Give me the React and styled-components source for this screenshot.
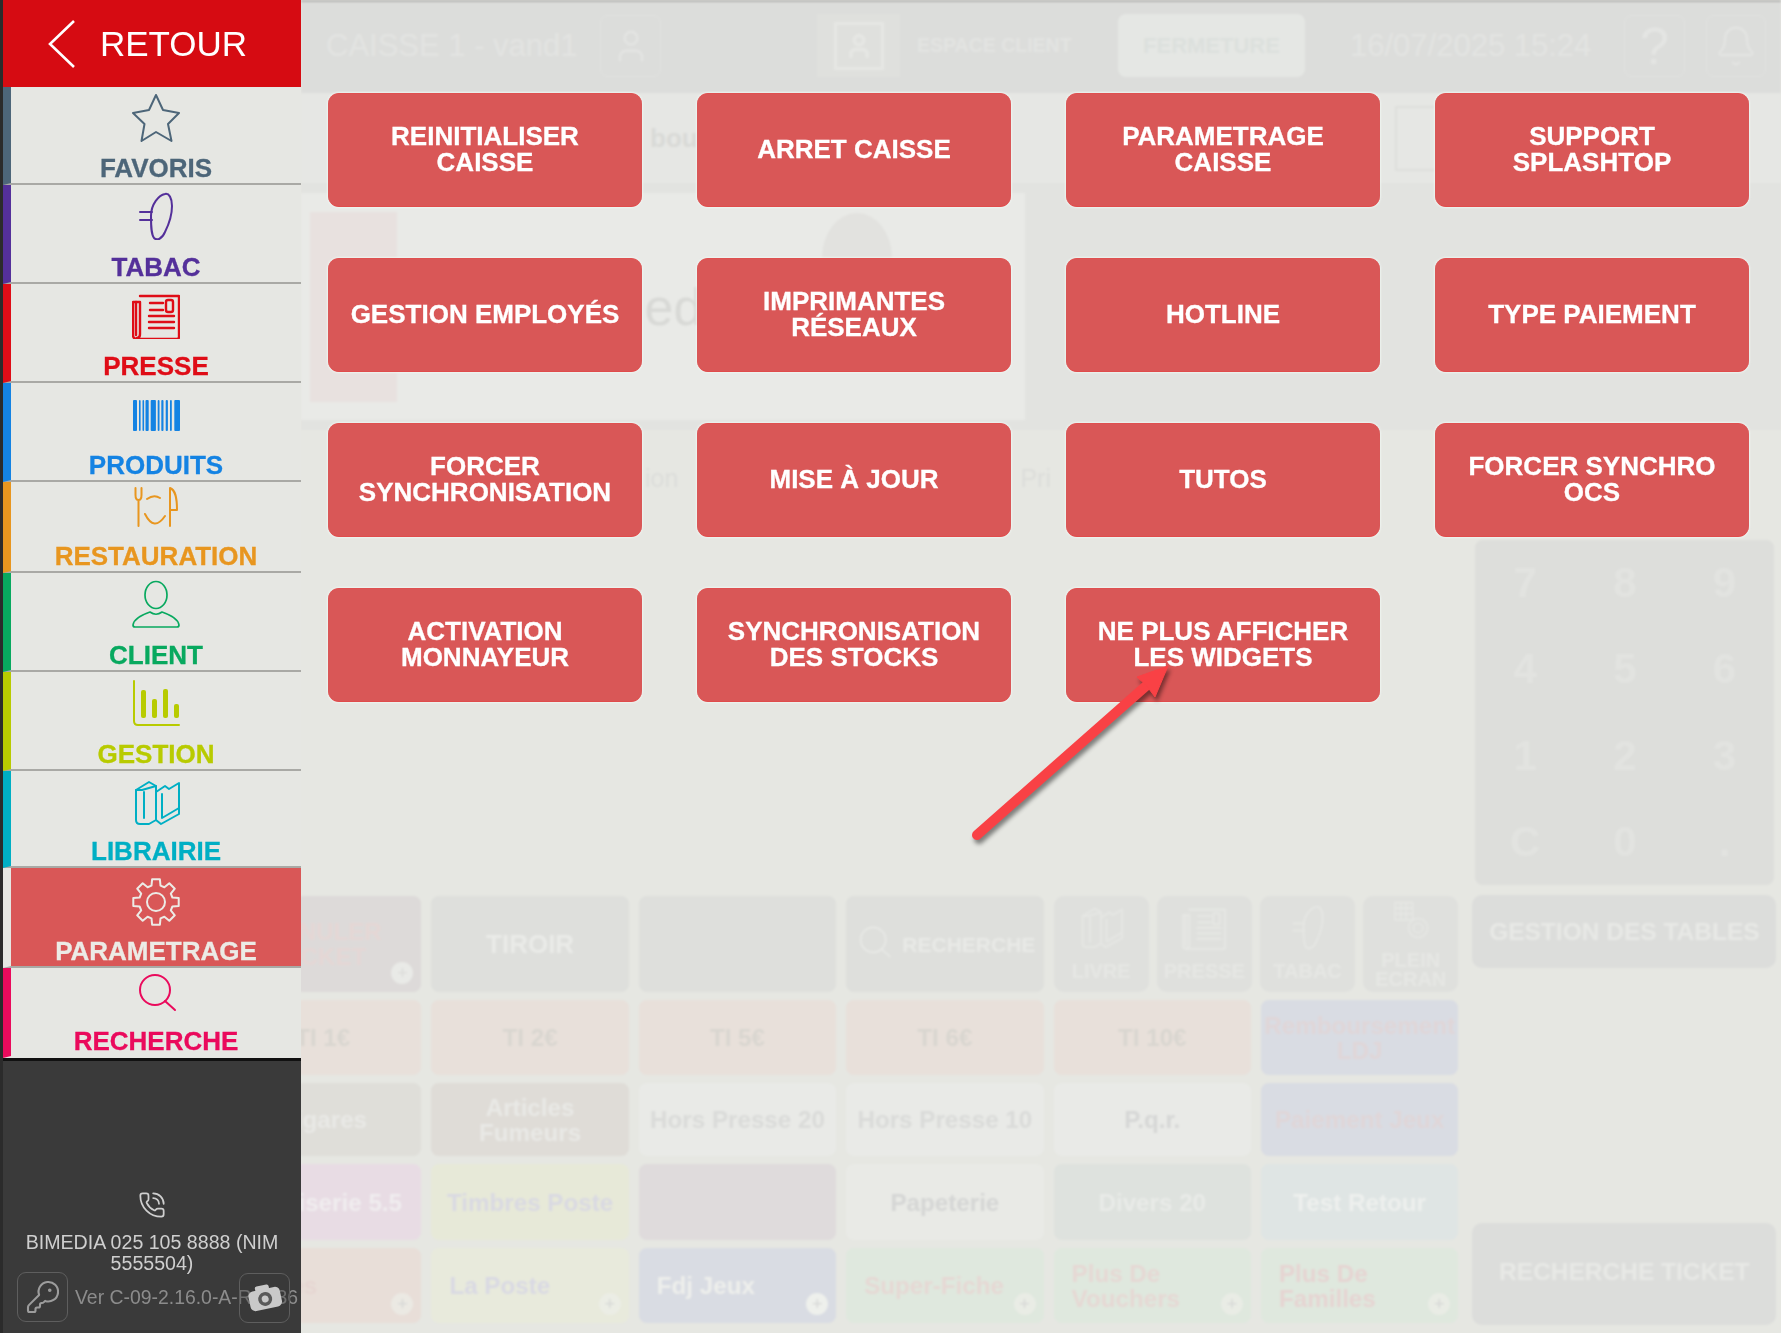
import React from 'react'
import styled, { createGlobalStyle } from 'styled-components'
import { Bell, KeyRound, PhoneCall, User } from 'lucide-react'

const Global = createGlobalStyle`
  html, body { margin: 0; padding: 0; background: #e6e7e2; }
  * { box-sizing: border-box; }
  body { font-family: "Liberation Sans", Arial, sans-serif; }
`

const Screen = styled.div`
  display: flex;
  width: 1781px;
  height: 1333px;
  overflow: hidden;
`

/* ---------- sidebar ---------- */

const Sidebar = styled.aside`
  position: relative;
  z-index: 2;
  flex: 0 0 301px;
  display: flex;
  flex-direction: column;
  border-left: 3px solid #2b2b2b;
  background: #e6e7e3;
`

const BackHeader = styled.div`
  height: 87px;
  display: flex;
  align-items: center;
  padding-left: 45px;
  gap: 25px;
  background: #d60b12;
  color: #fff;
  font-size: 35px;
`

const NavItem = styled.div`
  height: ${p => p.$h}px;
  padding-top: ${p => p.$top}px;
  display: flex;
  flex-direction: column;
  align-items: center;
  border-left: 8.5px solid ${p => p.$active ? '#e6e7e3' : p.$color};
  border-bottom: 2px solid ${p => p.$last ? 'transparent' : '#a9a9a5'};
  background: ${p => p.$active ? '#d95757' : '#e6e7e3'};
  color: ${p => p.$active ? '#ecebe6' : p.$color};
  svg { flex: 0 0 48px; }
`

const NavLabel = styled.div`
  margin-top: auto;
  padding-bottom: 1px;
  font-size: 26px;
  line-height: 27px;
  font-weight: 700;
  -webkit-text-stroke: 0.3px currentColor;
  white-space: nowrap;
`

const SideFooter = styled.div`
  flex: 1;
  display: flex;
  flex-direction: column;
  align-items: center;
  justify-content: flex-end;
  padding-bottom: 11px;
  background: #3a3a3a;
  border-top: 3px solid #111;
  color: #cfcfcf;
  svg.phone { margin-bottom: 13px; }
`

const Contact = styled.div`
  width: 270px;
  margin-bottom: -2px;
  text-align: center;
  font-size: 19.6px;
  line-height: 21px;
`

const FooterRow = styled.div`
  position: relative;
  width: 100%;
  display: flex;
  align-items: center;
  padding-left: 14px;
`

const KeyBox = styled.div`
  flex: 0 0 51px;
  height: 50px;
  display: flex;
  align-items: center;
  justify-content: center;
  border: 1.5px solid #5e5e5e;
  border-radius: 9px;
  color: #9c9c9c;
`

const Version = styled.span`
  margin-left: 7px;
  color: #8c8c8c;
  font-size: 19.4px;
  white-space: nowrap;
`

const CameraBox = styled(KeyBox)`
  position: absolute;
  left: 236px;
  top: 1px;
  width: 51px;
  background: rgba(58, 58, 58, 0.35);
`

/* ---------- faded screen behind the menu ---------- */

const Main = styled.main`
  position: relative;
  flex: 1;
  min-width: 0;
  overflow: hidden;
`

const Backdrop = styled.div`
  display: flex;
  flex-direction: column;
  height: 1333px;
  background: #e6e7e2;
  filter: blur(0.9px);
`

const TopBar = styled.div`
  flex: 0 0 93px;
  display: flex;
  align-items: center;
  padding: 0 0 4px 25px;
  background: #dcdddb;
  border-top: 2px solid #b4b4b2;
`

const BarText = styled.span`
  width: ${p => p.$w}px;
  margin-left: ${p => p.$ml || 0}px;
  color: #e3e4e2;
  font-size: ${p => p.$size}px;
  font-weight: ${p => p.$bold ? 700 : 400};
  white-space: nowrap;
`

const OutlineBox = styled.div`
  flex: 0 0 ${p => p.$w}px;
  height: 62px;
  margin-left: ${p => p.$ml}px;
  display: flex;
  align-items: center;
  justify-content: center;
  border: 1.5px solid #e2e3e1;
  border-radius: 8px;
  color: #e4e5e3;
  font-size: 52px;
`

const PortraitBox = styled.div`
  flex: 0 0 83px;
  height: 63px;
  margin-left: 156px;
  display: flex;
  align-items: center;
  justify-content: center;
  background: #dfe0dd;
  color: #e6e7e4;
`

const PortraitFrame = styled.div`
  width: 50px;
  height: 48px;
  display: flex;
  align-items: center;
  justify-content: center;
  border: 3px solid #e6e7e4;
`

const LightButton = styled.div`
  flex: 0 0 187px;
  height: 63px;
  margin-left: 47px;
  display: flex;
  align-items: center;
  justify-content: center;
  border-radius: 8px;
  background: #e5e7e4;
  color: #dce0dd;
  font-size: 22px;
  font-weight: 700;
`

const SearchBand = styled.div`
  flex: 0 0 90px;
  display: flex;
  align-items: center;
  padding-left: 349px;
  background: #e6e7e4;
  color: #d9dad7;
  font-size: 26px;
  font-weight: 700;
`

const BandBox = styled.div`
  width: 48px;
  height: 65px;
  margin-left: 697px;
  border: 2px solid #dedfdc;
`

const CardZone = styled.div`
  flex: 0 0 247px;
  padding-top: 10px;
  background: #e2e3e0;
`

const ProfileCard = styled.div`
  width: 724px;
  height: 227px;
  display: flex;
  align-items: center;
  background: #e9eae7;
  overflow: hidden;
`

const RedBlock = styled.div`
  flex: 0 0 87px;
  height: 190px;
  margin-left: 9px;
  background: #e8e1df;
`

const Brand = styled.div`
  margin-left: 158px;
  color: #d8d9d6;
  font-size: 52px;
`

const Head = styled.div`
  flex: 0 0 70px;
  height: 90px;
  align-self: flex-start;
  margin: 20px 0 0 79px;
  border-radius: 50%;
  background: #e2e2df;
`

const Lower = styled.div`
  flex: 1;
  display: flex;
  margin-left: -77px;
`

const LeftColumn = styled.div`
  flex: 0 0 1234px;
`

const Tabs = styled.div`
  height: 466px;
  padding: 34px 0 0 421px;
  display: flex;
  color: #dcddda;
  font-size: 25px;
  span + span { margin-left: 342px; }
`

const ProductGrid = styled.div`
  display: grid;
  grid-template-columns: repeat(6, 197.4px);
  grid-template-rows: 96px 75px 73px 76px 75px;
  gap: 8px 10px;
`

const Tile = styled.div`
  position: relative;
  display: flex;
  align-items: center;
  justify-content: ${p => p.$left ? 'flex-start' : 'center'};
  gap: 8px;
  padding: ${p => p.$left ? '0 8px 0 18px' : '0 6px'};
  border-radius: 8px;
  background: ${p => p.$bg};
  color: ${p => p.$fg};
  font-size: ${p => p.$size || 24.2}px;
  line-height: 25px;
  font-weight: 700;
  text-align: ${p => p.$left ? 'left' : 'center'};
  overflow: hidden;
`

const PlusBadge = styled.span`
  position: absolute;
  right: 8px;
  bottom: 8px;
  width: 22px;
  height: 22px;
  display: flex;
  align-items: center;
  justify-content: center;
  border-radius: 50%;
  background: ${p => p.$bg};
  color: ${p => p.$fg};
  font-size: 18px;
  font-weight: 400;
`

const QuickTiles = styled.div`
  grid-column: span 2;
  display: grid;
  grid-template-columns: repeat(4, 1fr);
  gap: 8px;
`

const QuickTile = styled.div`
  display: flex;
  flex-direction: column;
  align-items: center;
  justify-content: space-between;
  padding: ${p => p.$tight ? '3px 0 3px' : '6px 0 11px'};
  border-radius: 10px;
  background: #dfe0dd;
  color: #e6e7e4;
  font-size: 20px;
  line-height: 19px;
  font-weight: 700;
  text-align: center;
`

const RightColumn = styled.div`
  margin-left: 14px;
  width: 304px;
  display: flex;
  flex-direction: column;
  padding: 110px 0 8px;
`

const Keypad = styled.div`
  height: 345px;
  margin: 0 2px 0 3px;
  display: grid;
  grid-template-columns: repeat(3, 1fr);
  grid-template-rows: repeat(4, 1fr);
  align-items: center;
  justify-items: center;
  border-radius: 8px;
  background: #dddedb;
  color: #e2e3e0;
  font-size: 42px;
  font-weight: 700;
`

const SideAction = styled.div`
  height: ${p => p.$h}px;
  margin-top: ${p => p.$mt};
  padding-bottom: ${p => p.$pb || 0}px;
  display: flex;
  align-items: center;
  justify-content: center;
  border-radius: 10px;
  background: #dcdddb;
  color: #e8e9e6;
  font-size: 24.5px;
  font-weight: 700;
  white-space: nowrap;
`

/* ---------- settings menu ---------- */

const MenuLayer = styled.div`
  position: absolute;
  inset: 0;
  padding: 93px 0 0 27px;
`

const MenuGrid = styled.div`
  display: grid;
  grid-template-columns: repeat(4, 314px);
  grid-auto-rows: 114px;
  gap: 51px 55px;
`

const MenuButton = styled.div`
  display: flex;
  align-items: center;
  justify-content: center;
  padding: 0 12px 2px;
  border-radius: 11px;
  border-top: 1px solid #df5050;
  border-bottom: 1px solid #e04c4c;
  background: #d95757;
  box-shadow: 0 0 2px 1px rgba(240, 248, 244, 0.8);
  color: #fff;
  font-size: 26px;
  line-height: 26.5px;
  font-weight: 700;
  -webkit-text-stroke: 0.3px #fff;
  text-align: center;
`

const ArrowMark = styled.svg`
  position: absolute;
  left: 660px;
  top: 650px;
  overflow: visible;
  filter: drop-shadow(2px 4px 2px rgba(0, 0, 0, 0.45));
`

/* ---------- drawings ---------- */

const Drawing = ({ children, w = 48, h = 48, sw = 2 }) => (
  <svg width={w} height={h} viewBox="0 0 48 48" fill="none" stroke="currentColor"
    strokeWidth={sw} strokeLinecap="round" strokeLinejoin="round">
    {children}
  </svg>
)

const StarIcon = p => (
  <Drawing {...p}>
    <path d="M24 1 31 16 47 19 36 30 39.5 47 24 38 9.5 47 12.5 30 1 19 17 16Z" />
  </Drawing>
)

const TabacIcon = p => (
  <Drawing {...p}>
    <path d="M33 2C37 1 40 6 40 14 40 22 38 30 33 40 30 47 25 49 22 46 19 42 19 34 19 24 19 12 27 3 33 2Z" />
    <path d="M8 20H20M8 28H20" />
  </Drawing>
)

const PresseIcon = p => (
  <Drawing {...p} sw={2.4}>
    <path d="M8 5H47V46Q47 48 45 48H5Q1 48 1 44V11H8V43Q8 47 5 47" />
    <path d="M4 11V44" />
    <path d="M18 12H31M18 19H31M17 25H42M17 31H42M17 37H42" />
    <rect x="34" y="9" width="7" height="12" rx="2" />
  </Drawing>
)

const BarcodeIcon = p => (
  <Drawing {...p}>
    <g fill="currentColor" stroke="none">
      {[[1, 4], [7, 1.6], [10.5, 1.6], [13.5, 3.2], [18.7, 5.2], [25.7, 1.8], [29.3, 2.2], [33.7, 2.2], [38, 1.8], [42.3, 5.7]].map(([x, w]) => (
        <rect key={x} x={x} y="10" width={w} height="31" rx="0.9" />
      ))}
    </g>
  </Drawing>
)

const RestoIcon = p => (
  <Drawing {...p}>
    <path d="M3.5 2V9Q3.5 14 6.5 14T9.5 9V2M6.5 14V40" />
    <path d="M15 13Q22 8 28 12M13 28Q22 46 33 30" />
    <path d="M38 40V2C43 4 45 10 45 24H38" />
  </Drawing>
)

const ClientIcon = p => (
  <Drawing {...p} sw={1.7}>
    <ellipse cx="24" cy="15" rx="11" ry="13.5" />
    <path d="M1 45C2 38 12 34 18 32 22 35 26 35 30 32 36 34 46 38 47 45Q47 47 45 47H3Q1 47 1 45Z" />
  </Drawing>
)

const GestionIcon = p => (
  <Drawing {...p}>
    <path d="M2 2V42Q2 46 6 46H47" />
    <g fill="currentColor" stroke="none">
      <rect x="9" y="11" width="5" height="28" rx="2" />
      <rect x="20" y="20" width="5" height="19" rx="2" />
      <rect x="31" y="10" width="5" height="29" rx="2" />
      <rect x="42" y="25" width="5" height="14" rx="2" />
    </g>
  </Drawing>
)

const LibrairieIcon = p => (
  <Drawing {...p}>
    <path d="M4 12 17 4 24 8V42L17 46H8Q4 46 4 42Z" />
    <path d="M12 14V40M4 12H10L24 8" />
    <path d="M24 14 33 8 37 11 47 5V36L29 46 24 42" />
    <path d="M30 16V40L47 30" />
  </Drawing>
)

// 8 tooth cog, outline computed from the angle of each tooth
const gearPoints = () => {
  const pts = []
  for (let i = 0; i < 8; i++) {
    const a = (i * Math.PI) / 4 - Math.PI / 2
    ;[[-0.27, 17], [-0.17, 23], [0.17, 23], [0.27, 17]].forEach(([d, r]) => {
      pts.push(`${(24 + r * Math.cos(a + d)).toFixed(1)},${(24 + r * Math.sin(a + d)).toFixed(1)}`)
    })
  }
  return pts.join(' ')
}

const GearIcon = p => (
  <Drawing {...p}>
    <polygon points={gearPoints()} />
    <circle cx="24" cy="24" r="9" />
  </Drawing>
)

const SearchIcon = p => (
  <Drawing {...p}>
    <circle cx="23" cy="19" r="15" />
    <path d="M33 30 43 39" />
  </Drawing>
)

const ScreenGridIcon = p => (
  <Drawing {...p}>
    <path d="M4 2H26V24H4ZM4 9H26M4 16H26M11 2V24M18 2V24" />
    <circle cx="33" cy="34" r="12" />
    <circle cx="33" cy="34" r="6" />
  </Drawing>
)

const CameraGlyph = () => (
  <svg width="36" height="32" viewBox="0 0 36 32">
    <g transform="rotate(-12 18 16)">
      <rect x="2" y="7" width="32" height="20" rx="5" fill="#c9c9c9" />
      <rect x="10" y="3" width="14" height="6" rx="2" fill="#c9c9c9" />
      <circle cx="18" cy="17" r="7" fill="#5a5a5a" />
      <circle cx="18" cy="17" r="3.5" fill="#c9c9c9" />
    </g>
  </svg>
)

/* ---------- data ---------- */

const navItems = [
  { label: 'FAVORIS', color: '#4d6679', h: 98, top: 7, Icon: StarIcon },
  { label: 'TABAC', color: '#54309a', h: 99, top: 7, Icon: TabacIcon },
  { label: 'PRESSE', color: '#df0d17', h: 99, top: 7, Icon: PresseIcon },
  { label: 'PRODUITS', color: '#1483e3', h: 99, top: 7, Icon: BarcodeIcon },
  { label: 'RESTAURATION', color: '#e8961f', h: 91, top: 4, Icon: RestoIcon },
  { label: 'CLIENT', color: '#08a95f', h: 99, top: 7, Icon: ClientIcon },
  { label: 'GESTION', color: '#b8cb00', h: 99, top: 7, Icon: GestionIcon },
  { label: 'LIBRAIRIE', color: '#00afc4', h: 97, top: 7, Icon: LibrairieIcon },
  { label: 'PARAMETRAGE', color: '#d95757', h: 100, top: 10, Icon: GearIcon, active: true },
  { label: 'RECHERCHE', color: '#ea0a5c', h: 90, top: 3, Icon: SearchIcon, last: true },
]

const menuItems = [
  <>REINITIALISER<br />CAISSE</>,
  'ARRET CAISSE',
  <>PARAMETRAGE<br />CAISSE</>,
  <>SUPPORT<br />SPLASHTOP</>,
  'GESTION EMPLOYÉS',
  <>IMPRIMANTES<br />RÉSEAUX</>,
  'HOTLINE',
  'TYPE PAIEMENT',
  <>FORCER<br />SYNCHRONISATION</>,
  'MISE À JOUR',
  'TUTOS',
  <>FORCER SYNCHRO<br />OCS</>,
  <>ACTIVATION<br />MONNAYEUR</>,
  <>SYNCHRONISATION<br />DES STOCKS</>,
  <>NE PLUS AFFICHER<br />LES WIDGETS</>,
]

const peach = '#e8e0da'
const blue = '#d9dce3'
const green = '#dfe8de'

const lowerTiles = [
  { text: 'TI 1€', bg: peach, fg: '#d9d6d0' },
  { text: 'TI 2€', bg: peach, fg: '#d9d6d0' },
  { text: 'TI 5€', bg: peach, fg: '#d9d6d0' },
  { text: 'TI 6€', bg: peach, fg: '#d9d6d0' },
  { text: 'TI 10€', bg: peach, fg: '#d9d6d0' },
  { text: 'Remboursement LDJ', bg: blue, fg: '#e0d6d8' },
  { text: 'Cigares', bg: '#dfded9', fg: '#e9e9e6' },
  { text: 'Articles Fumeurs', bg: '#dfdcd7', fg: '#e9e9e6' },
  { text: 'Hors Presse 20', bg: '#e9eae7', fg: '#dadbd9' },
  { text: 'Hors Presse 10', bg: '#e9eae7', fg: '#dadbd9' },
  { text: 'P.q.r.', bg: '#e9eae7', fg: '#d6d7d6' },
  { text: 'Paiement Jeux', bg: blue, fg: '#e0d6d8' },
  { text: 'Confiserie 5.5', bg: '#e8dce4', fg: '#f0edef' },
  { text: 'Timbres Poste', bg: '#e7e9d8', fg: '#d9d9e2' },
  { text: '', bg: '#dfdbdc', fg: '#e4d0d0' },
  { text: 'Papeterie', bg: '#e9eae6', fg: '#d5d6d5' },
  { text: 'Divers 20', bg: '#dee2de', fg: '#e9ebe8' },
  { text: 'Test Retour', bg: '#dfe5e4', fg: '#eef0ee' },
  { text: 'Cartes', bg: '#e8ded8', fg: '#e6d6d2', plus: true, left: true },
  { text: 'La Poste', bg: '#e8eadc', fg: '#d9d9e3', plus: true, left: true },
  { text: 'Fdj Jeux', bg: blue, fg: '#eeefec', plus: true, left: true, badge: '#eef0ec' },
  { text: 'Super-Fiche', bg: green, fg: '#e6d8d4', plus: true, left: true },
  { text: 'Plus De Vouchers', bg: green, fg: '#e6d8d4', plus: true, left: true },
  { text: 'Plus De Familles', bg: green, fg: '#e6d4d2', plus: true, left: true },
]

const keys = ['7', '8', '9', '4', '5', '6', '1', '2', '3', 'C', '0', '.']

export default function App() {
  return (
    <Screen>
      <Global />
      <Sidebar>
        <BackHeader>
          <svg width="27" height="48" viewBox="0 0 27 48" fill="none" stroke="#fff" strokeWidth="2.6">
            <path d="M26 1 2 24 26 47" />
          </svg>
          RETOUR
        </BackHeader>
        {navItems.map(({ label, color, h, top, Icon, active, last }) => (
          <NavItem key={label} $color={color} $h={h} $top={top} $active={active} $last={last}>
            <Icon />
            <NavLabel>{label}</NavLabel>
          </NavItem>
        ))}
        <SideFooter>
          <PhoneCall className="phone" size={28} strokeWidth={1.5} />
          <Contact>BIMEDIA 025 105 8888 (NIM 5555504)</Contact>
          <FooterRow>
            <KeyBox><KeyRound size={36} strokeWidth={1.4} /></KeyBox>
            <Version>Ver C-09-2.16.0-A-RC136</Version>
            <CameraBox><CameraGlyph /></CameraBox>
          </FooterRow>
        </SideFooter>
      </Sidebar>

      <Main>
        <Backdrop>
          <TopBar>
            <BarText $w={274} $size={31}>CAISSE 1 - vand1</BarText>
            <OutlineBox $w={61} $ml={0}><User size={38} strokeWidth={1.5} /></OutlineBox>
            <PortraitBox>
              <PortraitFrame><User size={28} strokeWidth={3} /></PortraitFrame>
            </PortraitBox>
            <BarText $w={154} $ml={17} $size={19.5} $bold>ESPACE CLIENT</BarText>
            <LightButton>FERMETURE</LightButton>
            <BarText $w={274} $ml={45} $size={31}>16/07/2025 15:24</BarText>
            <OutlineBox $w={61} $ml={0}>?</OutlineBox>
            <OutlineBox $w={60} $ml={21}><Bell size={44} strokeWidth={1.2} /></OutlineBox>
          </TopBar>

          <SearchBand>
            bou
            <BandBox />
          </SearchBand>

          <CardZone>
            <ProfileCard>
              <RedBlock />
              <Brand>Bimedia</Brand>
              <Head />
            </ProfileCard>
          </CardZone>

          <Lower>
            <LeftColumn>
              <Tabs>
                <span>ion</span>
                <span>Pri</span>
              </Tabs>
              <ProductGrid>
                <Tile $bg="#dddad9" $fg="#e5d7d5">
                  ANNULER TICKET
                  <PlusBadge $bg="#e9eae7" $fg="#dcdcd9">+</PlusBadge>
                </Tile>
                <Tile $bg="#dedfdc" $fg="#eaebe8" $size={26}>TIROIR</Tile>
                <Tile $bg="#dedfdc" $fg="#eaebe8" />
                <Tile $bg="#dedfdc" $fg="#e9eae7" $size={21}>
                  <SearchIcon w={40} h={40} sw={2} />
                  RECHERCHE
                </Tile>
                <QuickTiles>
                  <QuickTile><LibrairieIcon w={44} h={50} />LIVRE</QuickTile>
                  <QuickTile><PresseIcon w={44} h={50} />PRESSE</QuickTile>
                  <QuickTile><TabacIcon w={44} h={50} />TABAC</QuickTile>
                  <QuickTile $tight>
                    <ScreenGridIcon w={38} h={42} />
                    <span>PLEIN<br />ECRAN</span>
                  </QuickTile>
                </QuickTiles>
                {lowerTiles.map((t, i) => (
                  <Tile key={i} $bg={t.bg} $fg={t.fg} $left={t.left}>
                    {t.text}
                    {t.plus && (
                      <PlusBadge $bg={t.badge || 'rgba(236,238,232,0.7)'} $fg="#d6d7d6">+</PlusBadge>
                    )}
                  </Tile>
                ))}
              </ProductGrid>
            </LeftColumn>

            <RightColumn>
              <Keypad>
                {keys.map(k => <span key={k}>{k}</span>)}
              </Keypad>
              <SideAction $h={73} $mt="10px">GESTION DES TABLES</SideAction>
              <SideAction $h={102} $mt="auto" $pb={4}>RECHERCHE TICKET</SideAction>
            </RightColumn>
          </Lower>
        </Backdrop>

        <MenuLayer>
          <MenuGrid>
            {menuItems.map((item, i) => <MenuButton key={i}>{item}</MenuButton>)}
          </MenuGrid>
          <ArrowMark width="225" height="200" viewBox="660 650 225 200">
            <path d="M676 835 845 686" stroke="#f94145" strokeWidth="10" strokeLinecap="round" fill="none" />
            <path d="M867 666 836 677 845 685 854 697Z" fill="#f94145" stroke="#f94145" strokeWidth="1" />
          </ArrowMark>
        </MenuLayer>
      </Main>
    </Screen>
  )
}
